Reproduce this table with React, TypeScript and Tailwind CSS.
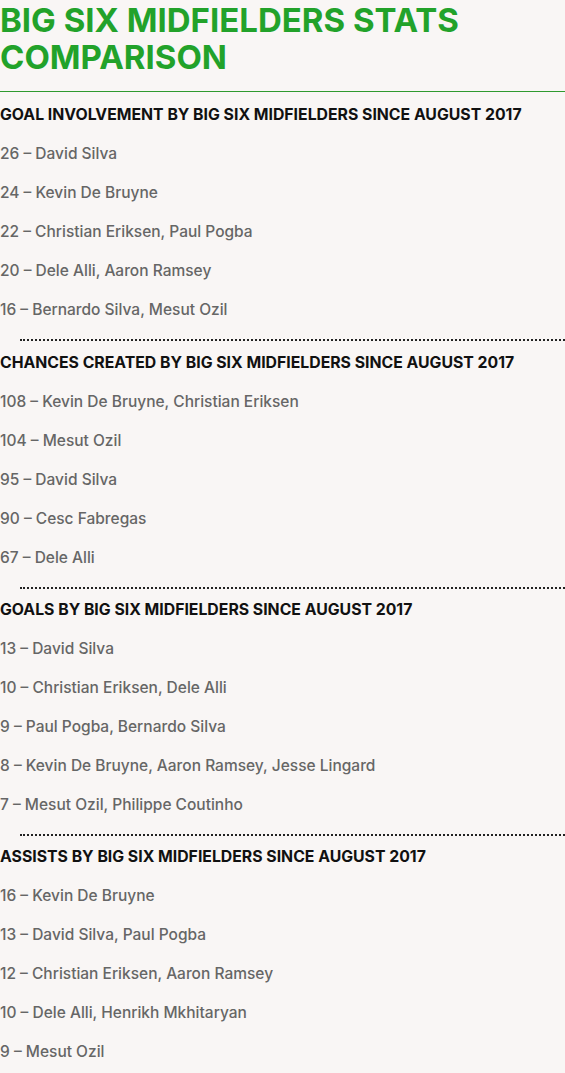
const SECTIONS = [
  {
    title: "GOAL INVOLVEMENT BY BIG SIX MIDFIELDERS SINCE AUGUST 2017",
    rows: [
      "26 – David Silva",
      "24 – Kevin De Bruyne",
      "22 – Christian Eriksen, Paul Pogba",
      "20 – Dele Alli, Aaron Ramsey",
      "16 – Bernardo Silva, Mesut Ozil",
    ],
  },
  {
    title: "CHANCES CREATED BY BIG SIX MIDFIELDERS SINCE AUGUST 2017",
    rows: [
      "108 – Kevin De Bruyne, Christian Eriksen",
      "104 – Mesut Ozil",
      "95 – David Silva",
      "90 – Cesc Fabregas",
      "67 – Dele Alli",
    ],
  },
  {
    title: "GOALS BY BIG SIX MIDFIELDERS SINCE AUGUST 2017",
    rows: [
      "13 – David Silva",
      "10 – Christian Eriksen, Dele Alli",
      "9 – Paul Pogba, Bernardo Silva",
      "8 – Kevin De Bruyne, Aaron Ramsey, Jesse Lingard",
      "7 – Mesut Ozil, Philippe Coutinho",
    ],
  },
  {
    title: "ASSISTS BY BIG SIX MIDFIELDERS SINCE AUGUST 2017",
    rows: [
      "16 – Kevin De Bruyne",
      "13 – David Silva, Paul Pogba",
      "12 – Christian Eriksen, Aaron Ramsey",
      "10 – Dele Alli, Henrikh Mkhitaryan",
      "9 – Mesut Ozil",
    ],
  },
];

export default function App() {
  return (
    <div className="min-h-[1073px] w-[565px] overflow-hidden bg-[#f9f6f5] font-['Inter',sans-serif]">
      <h1 className="pt-[2px] text-[33px] font-bold leading-[37px] text-[#22a22a]">
        BIG SIX MIDFIELDERS STATS
        <br />
        COMPARISON
      </h1>
      <div className="mt-[15px] h-px bg-[#2f9a2f]" />

      {SECTIONS.map((s, i) => (
        <div key={s.title}>
          {i > 0 && <div className="ml-[20px] mt-[19px] border-t-2 border-dotted border-[#222]" />}
          <h2 className={`${i === 0 ? "mt-[13px]" : i === 1 ? "mt-[12px]" : "mt-[11px]"} text-[15.8px] font-bold leading-[20px] text-[#111]`}>
            {s.title}
          </h2>
          <ul className="mt-[19px] flex flex-col gap-[19px]">
            {s.rows.map((r) => (
              <li key={r} className="text-[15.5px] font-medium leading-[20px] text-[#666]">
                {r}
              </li>
            ))}
          </ul>
        </div>
      ))}
    </div>
  );
}
